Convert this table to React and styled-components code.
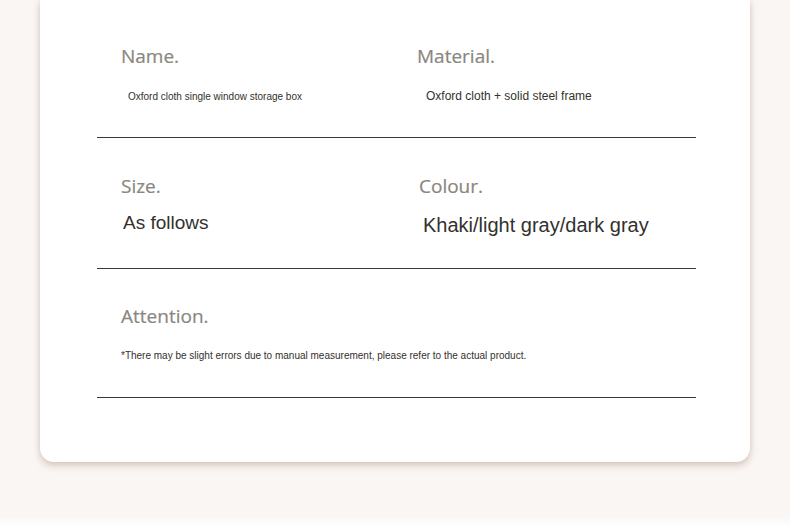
import React from 'react'
import styled, { createGlobalStyle } from 'styled-components'

const GlobalStyle = createGlobalStyle`
  html, body {
    margin: 0;
    padding: 0;
    background: #faf6f3;
  }
  * {
    box-sizing: border-box;
  }
`

const rows = [
  {
    top: 44,
    height: 138,
    cells: [
      { title: 'Name.', text: 'Oxford cloth single window storage box', size: 10, gap: 22, indent: 7 },
      { title: 'Material.', text: 'Oxford cloth + solid steel frame', size: 12, gap: 21, indent: 9 },
    ],
  },
  {
    top: 36,
    height: 131,
    cells: [
      { title: 'Size.', text: 'As follows', size: 19, gap: 13, indent: 2 },
      { title: 'Colour.', text: 'Khaki/light gray/dark gray', size: 20, gap: 15, indent: 4, shift: 2 },
    ],
  },
  {
    top: 35,
    height: 129,
    cells: [
      {
        title: 'Attention.',
        text: '*There may be slight errors due to manual measurement, please refer to the actual product.',
        size: 10,
        gap: 21,
        indent: 0,
        wide: true,
      },
    ],
  },
]

export default function App() {
  return (
    <Page>
      <GlobalStyle />
      <Card>
        {rows.map((row) => (
          <Section key={row.cells[0].title} top={row.top} height={row.height}>
            {row.cells.map((cell) => (
              <Cell key={cell.title} wide={cell.wide} shift={cell.shift}>
                <Heading>{cell.title}</Heading>
                <Value size={cell.size} gap={cell.gap} indent={cell.indent}>
                  {cell.text}
                </Value>
              </Cell>
            ))}
          </Section>
        ))}
      </Card>
      <Footer />
    </Page>
  )
}

const Page = styled.div`
  display: flex;
  flex-direction: column;
  width: 790px;
  height: 527px;
  background: #faf6f3;
  overflow: hidden;
`

const Card = styled.div`
  margin: 0 40px;
  padding: 0 54px 64px 57px;
  background: #ffffff;
  border-radius: 0 0 14px 14px;
  box-shadow: 0 4px 7px rgba(196, 170, 162, 0.55), 0 0 4px rgba(214, 200, 192, 0.5);
`

const Section = styled.section`
  display: grid;
  grid-template-columns: 296px 1fr;
  align-content: start;
  height: ${(props) => props.height}px;
  padding: ${(props) => props.top}px 0 0 24px;
  border-bottom: 1px solid #3a3835;
`

const Cell = styled.div`
  grid-column: ${(props) => (props.wide ? '1 / -1' : 'auto')};
  padding-left: ${(props) => props.shift || 0}px;
`

const Heading = styled.h4`
  margin: 0;
  font-family: 'Open Sans', 'Noto Sans', sans-serif;
  font-size: 19px;
  font-weight: 500;
  line-height: 24px;
  color: #8a8680;
  -webkit-text-stroke: 0.2px #8a8680;
`

const Value = styled.p`
  margin: ${(props) => props.gap}px 0 0 ${(props) => props.indent}px;
  font-family: 'Liberation Sans', Arial, sans-serif;
  font-size: ${(props) => props.size}px;
  line-height: ${(props) => (props.size > 14 ? 24 : 14)}px;
  color: #33312e;
  white-space: nowrap;
`

const Footer = styled.div`
  margin-top: auto;
  height: 10px;
  background: linear-gradient(#fbf8f6, #ffffff);
`
